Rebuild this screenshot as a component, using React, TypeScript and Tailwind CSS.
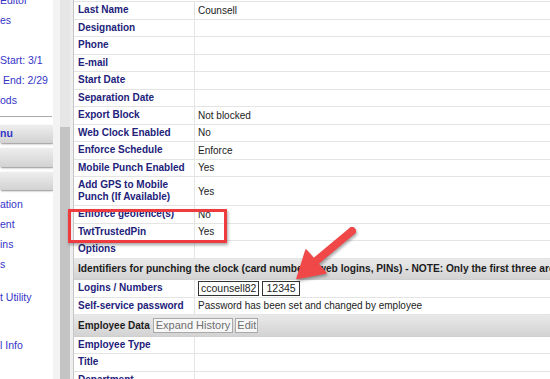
const SIDE_LINK = "text-[#3434c8] text-[10.5px] whitespace-nowrap";

type Row = { label: string; value?: string; tall?: boolean };

const TOP_ROWS: Row[] = [
  { label: "Last Name", value: "Counsell" },
  { label: "Designation" },
  { label: "Phone" },
  { label: "E-mail" },
  { label: "Start Date" },
  { label: "Separation Date" },
  { label: "Export Block", value: "Not blocked" },
  { label: "Web Clock Enabled", value: "No" },
  { label: "Enforce Schedule", value: "Enforce" },
  { label: "Mobile Punch Enabled", value: "Yes" },
  { label: "Add GPS to Mobile Punch (If Available)", value: "Yes", tall: true },
  { label: "Enforce geofence(s)", value: "No" },
  { label: "TwtTrustedPin", value: "Yes" },
  { label: "Options" },
];

function DataRow({ label, value, tall, children }: Row & { children?: React.ReactNode }) {
  return (
    <div
      className={`flex border-b border-[#e4e4e4] ${tall ? "h-[29px]" : "h-[17.5px]"}`}
    >
      <div className="w-[121px] shrink-0 flex items-center pl-[4px] pr-2 border-r border-[#e4e4e4] font-bold text-[#22227a] leading-[12px]">
        {tall ? (
          <span>
            Add GPS to Mobile
            <br />
            Punch (If Available)
          </span>
        ) : (
          label
        )}
      </div>
      <div className="flex-1 flex items-center pl-[3px] text-[#222] whitespace-nowrap">
        {children ?? value}
      </div>
    </div>
  );
}

function Band({ children }: { children: React.ReactNode }) {
  return (
    <div className="h-[21.5px] flex items-center pl-[4px] bg-gradient-to-b from-[#e9e9e9] to-[#d3d3d3] border-b border-[#cfcfcf] font-bold text-[#1c1c1c] text-[10.2px] whitespace-nowrap overflow-hidden">
      {children}
    </div>
  );
}

function Sidebar() {
  return (
    <div className="w-[53px] shrink-0 bg-white overflow-hidden flex flex-col">
      <div className={`${SIDE_LINK} h-[20px] leading-[20px] -mt-[10px]`}>Editor</div>
      <div className={`${SIDE_LINK} h-[20px] leading-[20px]`}>es</div>
      <div className="h-[20px]" />
      <div className={`${SIDE_LINK} h-[20px] leading-[20px]`}>Start: 3/1</div>
      <div className={`${SIDE_LINK} h-[20px] leading-[20px] ml-[3px]`}>End: 2/29</div>
      <div className={`${SIDE_LINK} h-[20px] leading-[20px]`}>ods</div>
      <div className="mt-[6px] h-px bg-[#a9a9a9] mr-[1px]" />
      <div className="mt-[8px] h-[18px] rounded-r-[2px] bg-gradient-to-b from-[#eeeeee] to-[#d2d2d2] shadow-[1px_1px_2px_#8f8f8f] flex items-center text-[10.5px] font-bold text-[#3434c8]">
        nu
      </div>
      <div className="mt-[5px] h-[19px] rounded-r-[2px] bg-gradient-to-b from-[#eeeeee] to-[#d2d2d2] shadow-[1px_1px_2px_#8f8f8f]" />
      <div className="mt-[5px] h-[18px] rounded-r-[2px] bg-gradient-to-b from-[#eeeeee] to-[#d2d2d2] shadow-[1px_1px_2px_#8f8f8f]" />
      <div className={`${SIDE_LINK} h-[20px] leading-[20px] mt-[4px]`}>ation</div>
      <div className={`${SIDE_LINK} h-[20px] leading-[20px]`}>ent</div>
      <div className={`${SIDE_LINK} h-[20px] leading-[20px]`}>ins</div>
      <div className={`${SIDE_LINK} h-[20px] leading-[20px]`}>s</div>
      <div className={`${SIDE_LINK} h-[20px] leading-[20px] mt-[13px]`}>t Utility</div>
      <div className={`${SIDE_LINK} h-[20px] leading-[20px] mt-[28px]`}>l Info</div>
    </div>
  );
}

export default function App() {
  return (
    <div
      className="relative w-[550px] h-[379px] overflow-hidden flex bg-white text-[10px]"
      style={{ fontFamily: '"Liberation Sans", Arial, sans-serif' }}
    >
      <Sidebar />
      <div className="w-[7px] shrink-0 bg-[#f3f3f3]" />
      <div className="w-[10px] shrink-0 flex flex-col">
        <div className="h-[127px] bg-[#e6e6e6]" />
        <div className="flex-1 bg-[#c4c4c4]" />
      </div>
      <div className="w-[3px] shrink-0 bg-[#eeeeee]" />

      <div className="flex-1 min-w-0 border-l border-[#c6c6c6] pt-px">
        <div className="border-t border-[#e4e4e4]">
          {TOP_ROWS.map((r) => (
            <DataRow key={r.label} {...r} />
          ))}
          <Band>
            Identifiers for punching the clock (card numbers, web logins, PINs) - NOTE: Only the first three are used
          </Band>
          <DataRow label="Logins / Numbers">
            <div className="flex gap-[3px] text-[10.5px]">
              <span className="border border-[#333] px-[2px] leading-[13px]">ccounsell82</span>
              <span className="border border-[#333] px-[3px] leading-[13px]">12345</span>
            </div>
          </DataRow>
          <DataRow label="Self-service password" value="Password has been set and changed by employee" />
          <Band>
            <span className="text-[10px]">Employee Data</span>
            <span className="ml-[3px] border border-[#a9a9a9] bg-[#f7f7f7] text-[#6f6f6f] font-normal text-[11px] px-[2px] leading-[13px]">
              Expand History
            </span>
            <span className="ml-[2px] border border-[#a9a9a9] bg-[#f7f7f7] text-[#6f6f6f] font-normal text-[11px] px-[1px] leading-[13px]">
              Edit
            </span>
          </Band>
          <DataRow label="Employee Type" />
          <DataRow label="Title" />
          <DataRow label="Department" />
        </div>
      </div>

      {/* annotation: highlight box */}
      <div className="absolute left-[68px] top-[209px] w-[159px] h-[34px] border-[3px] border-[#ee3b3f] shadow-[1px_2px_3px_rgba(0,0,0,0.35)]" />

      {/* annotation: arrow */}
      <svg
        className="absolute left-[290px] top-[220px] drop-shadow-[1px_2px_1.5px_rgba(0,0,0,0.35)]"
        width="70"
        height="66"
        viewBox="0 0 70 66"
      >
        <line x1="62" y1="11" x2="26" y2="41" stroke="#f04848" strokeWidth="8" strokeLinecap="round" />
        <polygon points="7,58.5 16,30 36,53" fill="#f04848" strokeLinejoin="round" stroke="#f04848" strokeWidth="1.5" />
      </svg>
    </div>
  );
}
